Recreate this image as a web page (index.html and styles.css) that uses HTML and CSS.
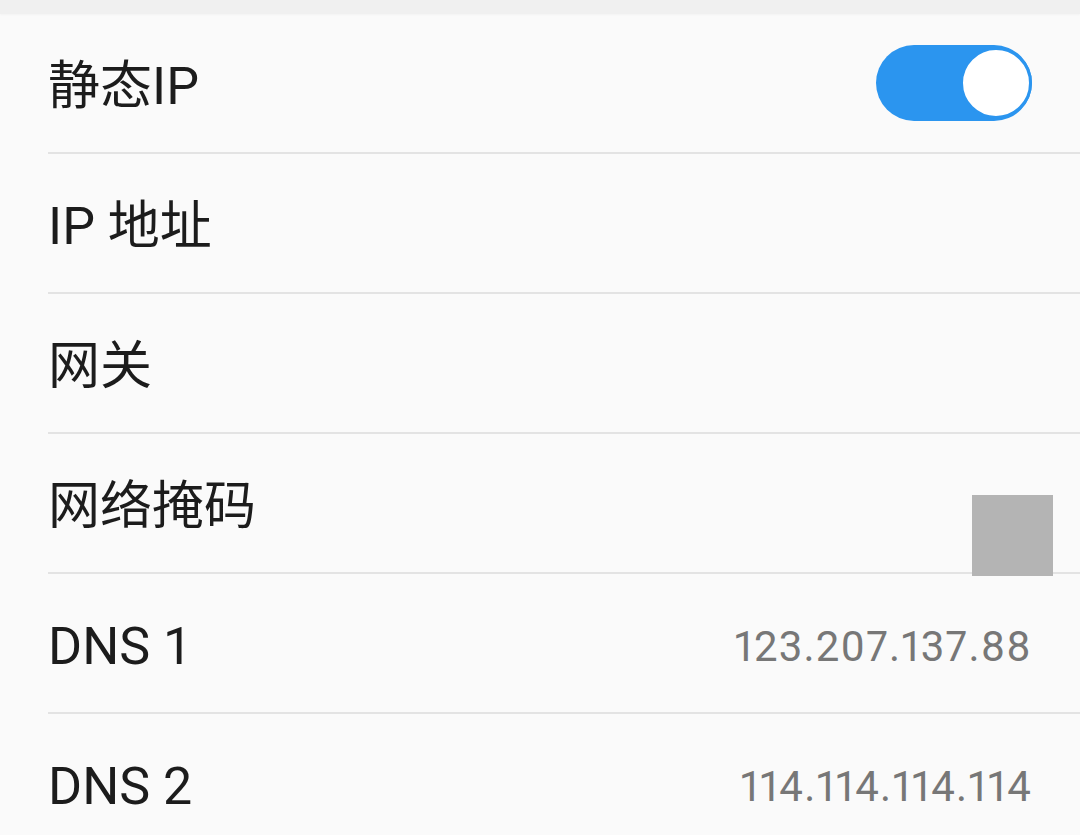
FILE: index.html
```html
<!DOCTYPE html>
<html lang="zh-CN">
<head>
<meta charset="utf-8">
<title>静态IP</title>
<link rel="stylesheet" href="styles.css">
</head>
<body>
<div class="topbar"></div>
<ul class="list">
  <li class="row">
    <div class="row-inner">
      <span class="label">静态IP</span>
      <span class="switch on"><span class="knob"></span></span>
    </div>
  </li>
  <li class="row">
    <div class="row-inner"><span class="label">IP 地址</span></div>
  </li>
  <li class="row">
    <div class="row-inner"><span class="label">网关</span></div>
  </li>
  <li class="row has-mask">
    <div class="row-inner"><span class="label">网络掩码</span></div>
    <span class="redact"></span>
  </li>
  <li class="row">
    <div class="row-inner">
      <span class="label">DNS 1</span>
      <span class="value">123.207.137.88</span>
    </div>
  </li>
  <li class="row">
    <div class="row-inner">
      <span class="label">DNS 2</span>
      <span class="value">114.114.114.114</span>
    </div>
  </li>
</ul>
</body>
</html>
```

FILE: styles.css
```css
html, body {
  margin: 0;
  padding: 0;
  background: #fafafa;
  width: 1080px;
  height: 835px;
  overflow: hidden;
  font-family: Roboto, "Noto Sans CJK SC", "Noto Sans", sans-serif;
}

.topbar {
  height: 14px;
  background: #f0f0f0;
  box-shadow: 0 1px 2px rgba(0,0,0,0.03);
}

.list {
  list-style: none;
  margin: 0;
  padding: 0;
}

.row {
  position: relative;
  height: 140px;
  padding-left: 48px;
}

.row-inner {
  box-sizing: border-box;
  height: 140px;
  padding-top: 8px;
  border-bottom: 2px solid #e3e3e3;
  display: flex;
  align-items: center;
  justify-content: space-between;
  padding-right: 48px;
}

.label {
  font-size: 52px;
  color: #1c1c1c;
  line-height: 1;
}

.value {
  font-size: 42px;
  color: #777777;
  line-height: 1;
  letter-spacing: 1.2px;
  margin-right: 0;
  font-variant-numeric: proportional-nums;
  font-feature-settings: "pnum" 1;
}

.switch {
  position: relative;
  display: block;
  width: 156px;
  height: 76px;
  margin-top: -8px;
  border-radius: 38px;
  background: #2b95ef;
}

.switch .knob {
  position: absolute;
  right: 0;
  top: 2px;
  width: 66px;
  height: 66px;
  border-radius: 50%;
  background: #ffffff;
  border: 3px solid #2b95ef;
}

.redact {
  position: absolute;
  top: 61px;
  right: 27px;
  width: 81px;
  height: 81px;
  background: #b4b4b4;
}
```
